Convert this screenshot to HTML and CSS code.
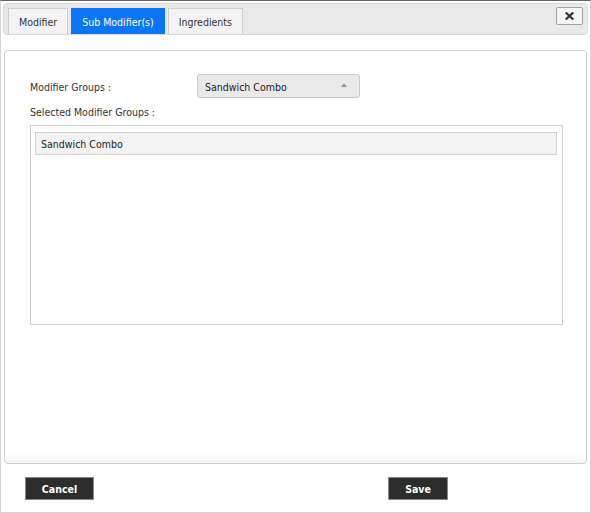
FILE: index.html
```html
<!DOCTYPE html>
<html lang="en">
<head>
    <meta charset="UTF-8">
    <meta name="viewport" content="width=device-width, initial-scale=1.0">
    <title>Sub Modifiers</title>
    <link rel="stylesheet" href="styles.css">
</head>
<body>
<div class="dialog">
    <div class="tabbar">
        <div class="tab">Modifier</div>
        <div class="tab active">Sub Modifier(s)</div>
        <div class="tab">Ingredients</div>
        <button class="close" type="button" title="Close">
            <svg width="9" height="8" viewBox="0 0 9 8">
                <path d="M1.5 1.2 L7.5 6.8 M7.5 1.2 L1.5 6.8" stroke="#333" stroke-width="2.2" stroke-linecap="square"/>
            </svg>
        </button>
    </div>
    <div class="panel">
        <div class="row">
            <label class="label" for="groups">Modifier Groups :</label>
            <div class="select" id="groups">
                <span>Sandwich Combo</span>
                <span class="arrow"></span>
            </div>
        </div>
        <div class="label sub">Selected Modifier Groups :</div>
        <div class="list">
            <div class="item">Sandwich Combo</div>
        </div>
    </div>
    <div class="footer">
        <button class="btn cancel" type="button">Cancel</button>
        <button class="btn save" type="button">Save</button>
    </div>
</div>
</body>
</html>
```

FILE: styles.css
```css
* {
    box-sizing: border-box;
}
body {
    margin: 0;
    font-family: "DejaVu Sans Condensed", "DejaVu Sans", Verdana, sans-serif;
    font-size: 10.5px;
    color: #333;
    background: #fff;
}
.dialog {
    width: 591px;
    height: 513px;
    border-top: 1px solid #666;
    border-left: 1px solid #d4d4d4;
    border-right: 1px solid #d4d4d4;
    border-bottom: 1px solid #d4d4d4;
    display: flex;
    flex-direction: column;
}
.tabbar {
    margin: 2px 2px 0 2px;
    height: 32px;
    background: #e9e9e9;
    border: 1px solid #dadada;
    border-radius: 4px;
    padding: 4px 4px 0 4px;
    display: flex;
    align-items: flex-start;
    gap: 3px;
}
.tab {
    height: 26px;
    line-height: 27px;
    padding: 0 10px;
    background: #f3f3f3;
    border: 1px solid #cfcfcf;
    border-bottom: none;
    color: #333;
}
.tab.active {
    background: #0a76f6;
    border-color: #0a76f6;
    color: #fff;
}
.close {
    margin-left: auto;
    margin-top: -1px;
    width: 27px;
    height: 18px;
    padding: 0;
    border: 1px solid #a0a0a0;
    border-radius: 2px;
    background: #f6f6f6;
    display: flex;
    align-items: center;
    justify-content: center;
}
.panel {
    margin: 15px 3px 0 3px;
    height: 414px;
    border: 1px solid #cfcfcf;
    border-radius: 4px;
    box-shadow: inset 0 -12px 12px -10px #eee;
    padding: 23px 23px 0 25px;
}
.row {
    display: flex;
    align-items: center;
}
.label {
    width: 167px;
}
.row .label {
    padding-top: 2px;
}
.label.sub {
    width: auto;
    margin-top: 8px;
}
.select {
    width: 163px;
    height: 24px;
    background: #e9e9e9;
    border: 1px solid #c9c9c9;
    border-radius: 3px;
    padding: 2px 12px 0 7px;
    display: flex;
    align-items: center;
    justify-content: space-between;
    color: #222;
}
.arrow {
    width: 0;
    height: 0;
    border-left: 3px solid transparent;
    border-right: 3px solid transparent;
    border-bottom: 4px solid #999;
    margin-top: -4px;
}
.list {
    margin-top: 7px;
    height: 200px;
    border: 1px solid #cfcfcf;
    padding: 6px 5px 0 4px;
}
.item {
    height: 23px;
    line-height: 22px;
    padding: 0 5px;
    background: #f3f3f3;
    border: 1px solid #d0d0d0;
    color: #222;
}
.footer {
    flex: 1;
    display: flex;
    align-items: flex-start;
    padding: 13px 0 0 24px;
}
.btn {
    height: 23px;
    background: #2d2d2d;
    border: 1px solid #888;
    color: #fff;
    font-family: "DejaVu Sans Condensed", "DejaVu Sans", Verdana, sans-serif;
    font-size: 10.5px;
    font-weight: bold;
    padding: 0;
    cursor: pointer;
}
.cancel {
    width: 69px;
}
.save {
    width: 60px;
    margin-left: 294px;
}
```
